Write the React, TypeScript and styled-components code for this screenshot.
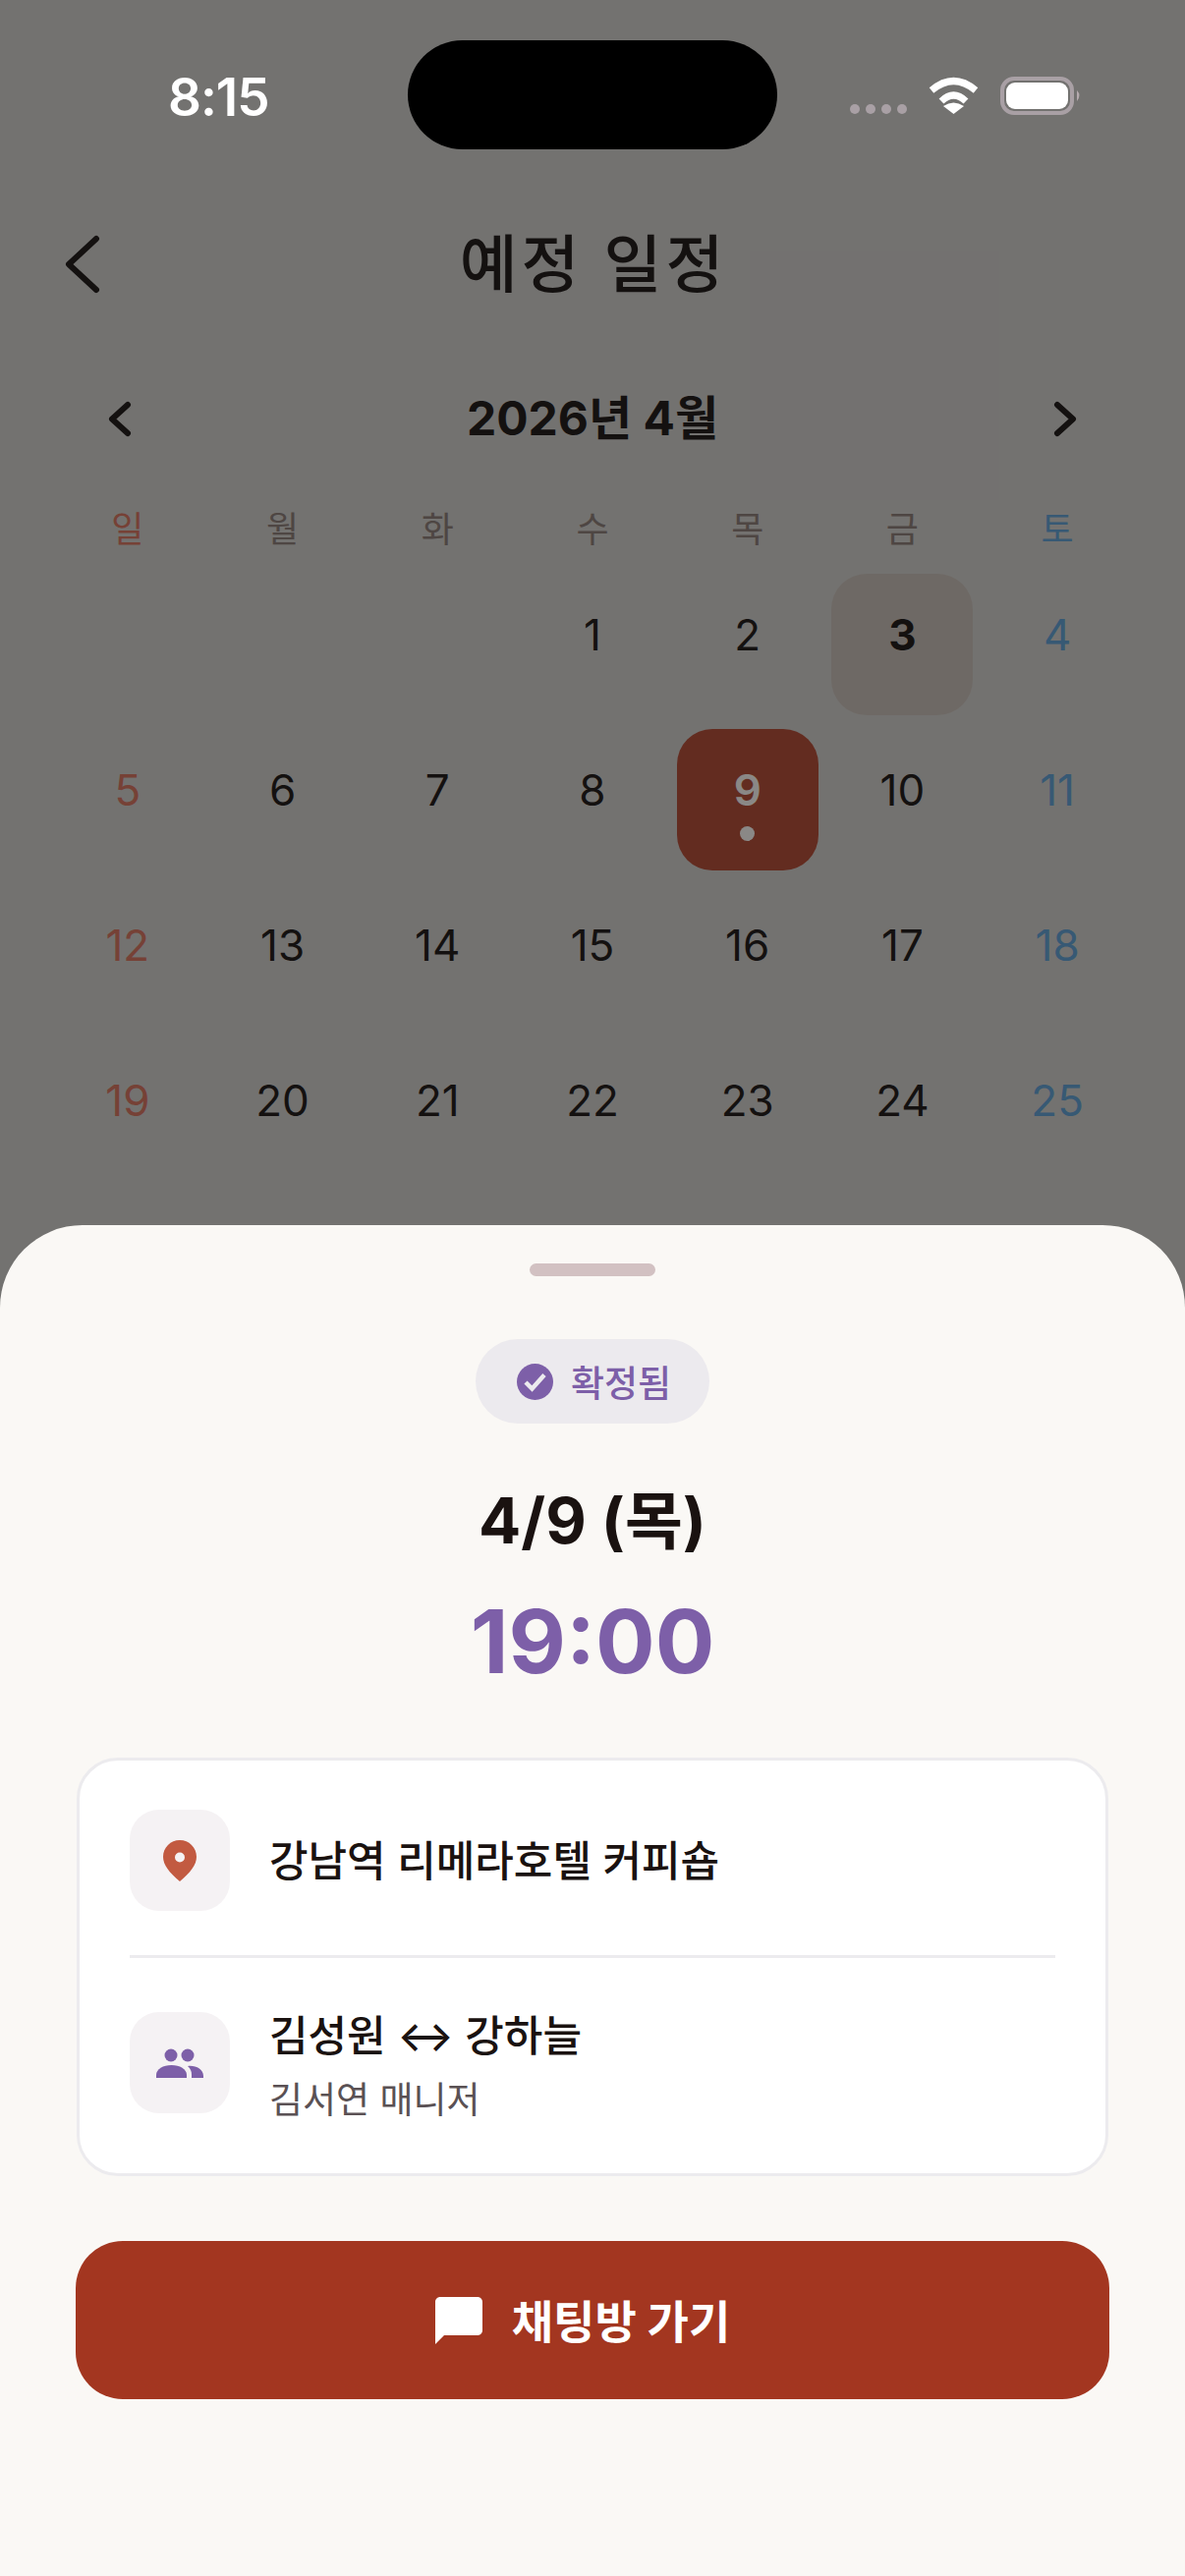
import React from "react";
import styled, { createGlobalStyle } from "styled-components";

const GlobalStyle = createGlobalStyle`
  html, body {
    margin: 0;
    padding: 0;
    background: #faf8f5;
  }
  * {
    box-sizing: border-box;
  }
`;

const FONT = `Inter, "Noto Sans CJK KR", sans-serif`;

const Page = styled.div`
  position: relative;
  width: 1206px;
  height: 2622px;
  overflow: hidden;
  background: #c3c2c0;
  color: #040000;
  font-family: ${FONT};
`;

const Dim = styled.div`
  position: absolute;
  inset: 0;
  background: rgba(35, 33, 32, 0.5);
`;

const StatusBar = styled.div`
  position: relative;
  z-index: 2;
  height: 222px;
  padding: 41px 70px 0 171px;
  display: flex;
  align-items: flex-start;
`;

const Time = styled.div`
  width: 244px;
  margin-top: 28px;
  color: #fff;
  font-size: 53px;
  line-height: 60px;
  font-weight: 600;
  letter-spacing: -1px;
`;

const Island = styled.div`
  width: 376px;
  height: 111px;
  border-radius: 56px;
  background: #000;
`;

const StatusIcons = styled.div`
  margin: 36px 0 0 74px;
`;

const Header = styled.div`
  height: 94px;
  padding: 0 0 0 66px;
  display: flex;
  align-items: center;
  position: relative;
`;

const Title = styled.h1`
  flex: 1;
  margin: 0 0 0 -40px;
  padding-right: 60px;
  text-align: center;
  font-size: 64px;
  line-height: 94px;
  font-weight: 500;
  letter-spacing: 4px;
`;

const MonthNav = styled.div`
  margin-top: 80px;
  height: 60px;
  padding: 0 110px;
  display: flex;
  align-items: center;
  justify-content: space-between;
`;

const MonthLabel = styled.div`
  font-size: 48px;
  line-height: 60px;
  font-weight: 700;
`;

const Weekdays = styled.div`
  margin: 61px 51px 0;
  display: grid;
  grid-template-columns: repeat(7, 1fr);
`;

const Weekday = styled.div<{ $tone?: string }>`
  text-align: center;
  font-size: 36px;
  line-height: 44px;
  color: ${(p) => p.$tone || "#786a66"};
`;

const DayGrid = styled.div`
  margin: 23px 51px 0;
  display: grid;
  grid-template-columns: repeat(7, 1fr);
  grid-auto-rows: 158px;
`;

const Day = styled.div<{ $tone?: string; $kind?: string }>`
  width: 144px;
  height: 144px;
  justify-self: center;
  padding-top: 36px;
  border-radius: 36px;
  display: flex;
  flex-direction: column;
  align-items: center;
  font-size: 44px;
  line-height: 52px;
  font-weight: ${(p) => (p.$kind === "selected" ? 600 : p.$kind ? 700 : 400)};
  color: ${(p) => (p.$kind === "selected" ? "#f0eeec" : p.$tone || "#040000")};
  background: ${(p) =>
    p.$kind === "selected" ? "#a33620" : p.$kind === "today" ? "#b9b1aa" : "transparent"};
`;

const Dot = styled.span`
  width: 15px;
  height: 15px;
  margin-top: 11px;
  border-radius: 50%;
  background: #f0eeec;
`;

const Sheet = styled.div`
  position: absolute;
  z-index: 3;
  left: 0;
  right: 0;
  bottom: 0;
  height: 1375px;
  padding: 39px 77px 0;
  border-radius: 84px 84px 0 0;
  background: #faf8f5;
  color: #1a1210;
  display: flex;
  flex-direction: column;
  align-items: center;
`;

const Handle = styled.div`
  width: 128px;
  height: 13px;
  border-radius: 7px;
  background: #d2c1c2;
`;

const Badge = styled.div`
  margin-top: 64px;
  width: 238px;
  height: 86px;
  padding-left: 3px;
  border-radius: 43px;
  background: #eceaee;
  display: flex;
  align-items: center;
  justify-content: center;
  gap: 18px;
  color: #7d5fa8;
  font-size: 37px;
  font-weight: 500;
`;

const DateLine = styled.div`
  margin-top: 59px;
  font-size: 64px;
  line-height: 80px;
  font-weight: 700;
`;

const TimeLine = styled.div`
  margin-top: 30px;
  color: #7d5fa8;
  font-size: 90px;
  line-height: 106px;
  font-weight: 700;
`;

const InfoCard = styled.div`
  align-self: stretch;
  margin: 65px 1px 0;
  height: 426px;
  padding: 50px 51px 0;
  border: 3px solid #ecebee;
  border-radius: 42px;
  background: #fff;
`;

const InfoRow = styled.div`
  display: flex;
  align-items: center;
  gap: 40px;
`;

const IconBox = styled.div`
  width: 102px;
  height: 103px;
  flex: none;
  border-radius: 30px;
  background: #f5f2f4;
  display: flex;
  align-items: center;
  justify-content: center;
`;

const RowTitle = styled.div`
  font-size: 43px;
  line-height: 56px;
  font-weight: 500;
`;

const RowSub = styled.div`
  margin: 15px 0 -6px;
  color: #5a5154;
  font-size: 37px;
  line-height: 46px;
`;

const Divider = styled.div`
  height: 3px;
  margin: 45px 0 51px;
  background: #ecebee;
`;

const ChatButton = styled.div`
  align-self: stretch;
  margin-top: 66px;
  height: 161px;
  padding-right: 20px;
  border-radius: 48px;
  background: #a33620;
  color: #fff;
  display: flex;
  align-items: center;
  justify-content: center;
  gap: 30px;
  font-size: 46px;
  font-weight: 700;
`;

const ChatLabel = styled.span`
  margin-bottom: 4px;
`;

const RED = "#c8604c";
const BLUE = "#4a90c8";

const WEEKDAYS = ["일", "월", "화", "수", "목", "금", "토"];
const DAYS: (number | null)[] = [
  null, null, null, 1, 2, 3, 4,
  5, 6, 7, 8, 9, 10, 11,
  12, 13, 14, 15, 16, 17, 18,
  19, 20, 21, 22, 23, 24, 25,
];

const toneFor = (column: number) => (column === 0 ? RED : column === 6 ? BLUE : undefined);

function Chevron({ left, width, height, stroke }: { left?: boolean; width: number; height: number; stroke: number }) {
  const inset = stroke / 2 + 1;
  const points = left
    ? `${width - inset},${inset} ${inset},${height / 2} ${width - inset},${height - inset}`
    : `${inset},${inset} ${width - inset},${height / 2} ${inset},${height - inset}`;
  return (
    <svg width={width} height={height} viewBox={`0 0 ${width} ${height}`}>
      <polyline points={points} fill="none" stroke="#040000" strokeWidth={stroke} strokeLinecap="round" strokeLinejoin="round" />
    </svg>
  );
}

function StatusGlyphs() {
  return (
    <svg width="240" height="42" viewBox="0 0 240 42">
      <g fill="#a9a0a5">
        <circle cx="5" cy="34" r="5" />
        <circle cx="21" cy="34" r="5" />
        <circle cx="37" cy="34" r="5" />
        <circle cx="53" cy="34" r="5" />
      </g>
      <g fill="none" stroke="#fff" strokeWidth="7">
        <path d="M83 15 Q105.500 -4 128 15" />
        <path d="M93 26 Q105.500 14 118 26" />
      </g>
      <path d="M105.500 39 L95 31 Q105.500 24 116 31 Z" fill="#fff" />
      <rect x="155" y="3" width="71" height="35" rx="12" fill="none" stroke="#a9a0a5" strokeWidth="4" />
      <rect x="159" y="7" width="63" height="27" rx="9" fill="#fff" />
      <path d="M231 15 Q236 20 231 26 Z" fill="#b5aaae" />
    </svg>
  );
}

export default function App() {
  return (
    <Page>
      <GlobalStyle />
      <StatusBar>
        <Time>8:15</Time>
        <Island />
        <StatusIcons>
          <StatusGlyphs />
        </StatusIcons>
      </StatusBar>

      <Header>
        <Chevron left width={36} height={60} stroke={6} />
        <Title>예정 일정</Title>
      </Header>

      <MonthNav>
        <Chevron left width={24} height={37} stroke={6} />
        <MonthLabel>2026년 4월</MonthLabel>
        <Chevron width={24} height={37} stroke={6} />
      </MonthNav>

      <Weekdays>
        {WEEKDAYS.map((d, i) => (
          <Weekday key={d} $tone={toneFor(i)}>{d}</Weekday>
        ))}
      </Weekdays>

      <DayGrid>
        {DAYS.map((d, i) => (
          <Day
            key={i}
            $tone={toneFor(i % 7)}
            $kind={d === 9 ? "selected" : d === 3 ? "today" : undefined}
          >
            {d}
            {d === 9 ? <Dot /> : null}
          </Day>
        ))}
      </DayGrid>

      <Dim />

      <Sheet>
        <Handle />
        <Badge>
          <svg width="37" height="37" viewBox="0 0 37 37">
            <circle cx="18.500" cy="18.500" r="18.500" fill="#7d5fa8" />
            <polyline points="9,19 15.500,25.500 28,11.500" fill="none" stroke="#eceaee" strokeWidth="4.500" />
          </svg>
          확정됨
        </Badge>
        <DateLine>4/9 (목)</DateLine>
        <TimeLine>19:00</TimeLine>

        <InfoCard>
          <InfoRow>
            <IconBox>
              <svg width="34" height="42" viewBox="0 0 34 42">
                <path
                  fillRule="evenodd"
                  fill="#c25a41"
                  d="M17 0C7.600 0 0 7.400 0 17c0 8.200 6.600 16.400 17 25 10.400-8.600 17-16.800 17-25C34 7.400 26.400 0 17 0ZM17 12.500a5 5 0 1 1 0 10a5 5 0 1 1 0-10Z"
                />
              </svg>
            </IconBox>
            <RowTitle>강남역 리메라호텔 커피숍</RowTitle>
          </InfoRow>
          <Divider />
          <InfoRow>
            <IconBox>
              <svg width="48" height="30" viewBox="0 0 48 30">
                <g fill="#7d5fa8">
                  <circle cx="15" cy="7" r="6.500" />
                  <circle cx="32" cy="7" r="6.500" />
                  <path d="M0 30v-3c0-6 7-10 15.500-10s15.500 4 15.500 10v3Z" />
                  <path d="M32 18c8-1 16 3 16 10v2H36v-3c0-4-1-6-4-9Z" />
                </g>
              </svg>
            </IconBox>
            <div>
              <RowTitle>김성원 ↔ 강하늘</RowTitle>
              <RowSub>김서연 매니저</RowSub>
            </div>
          </InfoRow>
        </InfoCard>

        <ChatButton>
          <svg width="48" height="48" viewBox="0 0 48 48">
            <path
              fill="#fff"
              d="M5 0h38c2.800 0 5 2.200 5 5v29c0 2.800-2.200 5-5 5H9l-9 9V5c0-2.800 2.200-5 5-5Z"
            />
          </svg>
          <ChatLabel>채팅방 가기</ChatLabel>
        </ChatButton>
      </Sheet>
    </Page>
  );
}
